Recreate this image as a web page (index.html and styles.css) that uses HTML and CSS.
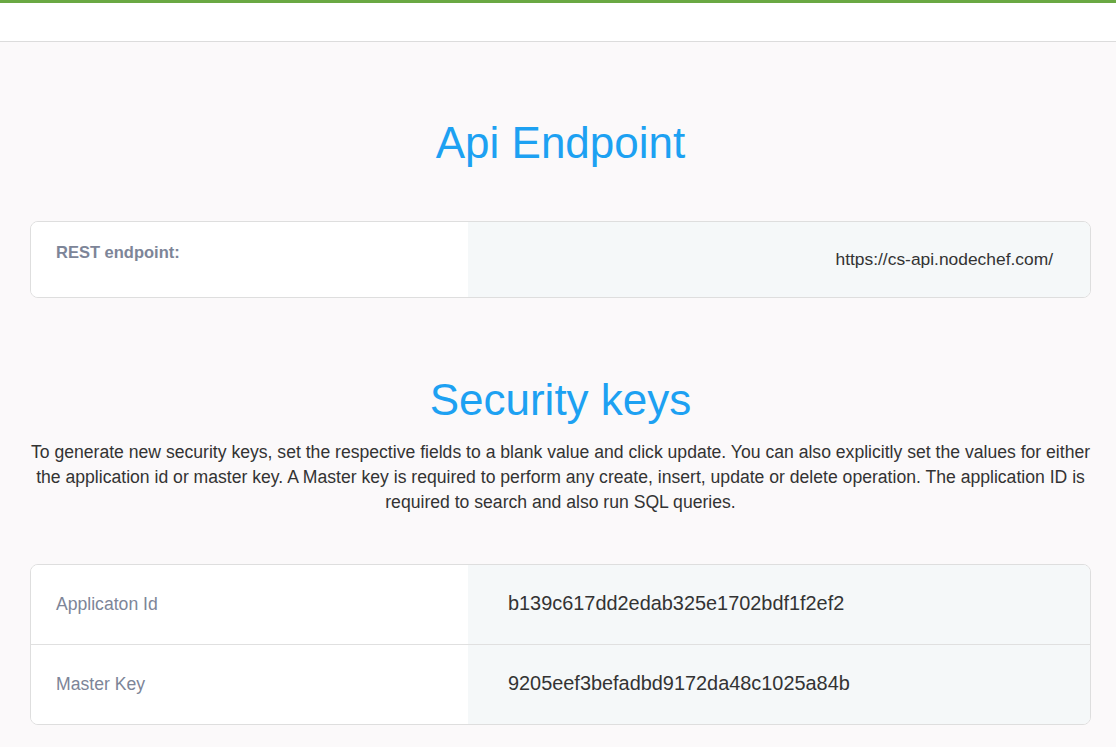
FILE: index.html
```html
<!DOCTYPE html>
<html lang="en">
<head>
<meta charset="utf-8">
<title>Api Endpoint</title>
<link rel="stylesheet" href="styles.css">
</head>
<body>
<header class="topbar"></header>
<main class="page">
  <h1 class="section-title title-api">Api Endpoint</h1>
  <div class="card card-endpoint">
    <div class="cell cell-label cell-top"><span class="label-bold">REST endpoint:</span></div>
    <div class="cell cell-value cell-url"><span class="url">https://cs-api.nodechef.com/</span></div>
  </div>

  <h1 class="section-title title-keys">Security keys</h1>
  <p class="intro">To generate new security keys, set the respective fields to a blank value and click update. You can also explicitly set the values for either the application id or master key. A Master key is required to perform any create, insert, update or delete operation. The application ID is required to search and also run SQL queries.</p>

  <div class="card card-keys">
    <div class="row">
      <div class="cell cell-label"><span class="label">Applicaton Id</span></div>
      <div class="cell cell-value"><span class="key">b139c617dd2edab325e1702bdf1f2ef2</span></div>
    </div>
    <div class="row row-divided">
      <div class="cell cell-label"><span class="label">Master Key</span></div>
      <div class="cell cell-value"><span class="key">9205eef3befadbd9172da48c1025a84b</span></div>
    </div>
  </div>
</main>
</body>
</html>
```

FILE: styles.css
```css
* { box-sizing: border-box; }

html, body {
  margin: 0;
  padding: 0;
}

body {
  background: #fbf9fa;
  font-family: "Liberation Sans", Arial, sans-serif;
  color: #333333;
  font-size: 16px;
  line-height: 1.5;
}

.topbar {
  height: 42px;
  background: #ffffff;
  border-top: 3px solid #6aa843;
  border-bottom: 1px solid #dcdcdc;
}

.page {
  width: 1061px;
  margin-left: 30px;
  padding-bottom: 40px;
}

.section-title {
  margin: 0;
  text-align: center;
  font-weight: 400;
  font-size: 44px;
  line-height: 1.2;
  color: #1da1f2;
}

.title-api {
  padding-top: 75px;
  margin-bottom: 51px;
}

.title-keys {
  margin-top: 76px;
}

.intro {
  margin: 13px 0 0;
  text-align: center;
  font-size: 17.6px;
  line-height: 25px;
  color: #333333;
}

.card {
  background: #ffffff;
  border: 1px solid #dedede;
  border-radius: 8px;
  overflow: hidden;
}

.card-endpoint {
  display: grid;
  grid-template-columns: 437px 1fr;
  height: 77px;
}

.card-keys {
  margin-top: 49px;
}

.row {
  display: grid;
  grid-template-columns: 437px 1fr;
  height: 79px;
}

.row-divided {
  border-top: 1px solid #e0e0e0;
  height: 80px;
}

.cell {
  display: flex;
  align-items: center;
}

.cell-label {
  padding-left: 25px;
  background: #ffffff;
}

.cell-top {
  align-items: flex-start;
  padding-top: 18px;
}

.cell-value {
  background: #f5f8f9;
  padding-left: 40px;
}

.cell-url {
  justify-content: flex-end;
  padding: 0 37px 0 0;
}

.label-bold {
  font-weight: 700;
  font-size: 16.5px;
  line-height: 24px;
  color: #7d8598;
}

.label {
  font-size: 17.6px;
  color: #7d8598;
}

.url {
  font-size: 17.4px;
  line-height: 24px;
  color: #333333;
}

.key {
  font-size: 19.9px;
  color: #333333;
}
```
